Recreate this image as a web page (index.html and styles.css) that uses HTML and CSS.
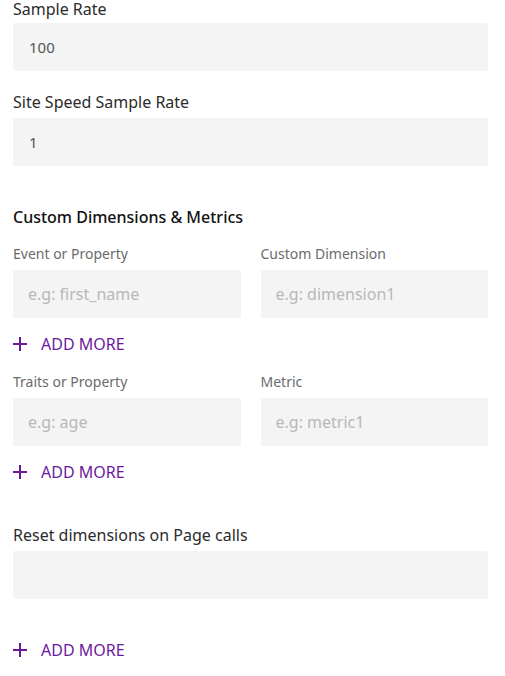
FILE: index.html
```html
<!DOCTYPE html>
<html>
<head>
<meta charset="utf-8">
<link rel="stylesheet" href="styles.css">
</head>
<body>
<div class="form">
  <div class="field first">
    <div class="label">Sample Rate</div>
    <div class="input"><span class="value">100</span></div>
  </div>
  <div class="field">
    <div class="label">Site Speed Sample Rate</div>
    <div class="input"><span class="value">1</span></div>
  </div>

  <div class="heading">Custom Dimensions &amp; Metrics</div>

  <div class="pair">
    <div class="col">
      <div class="sublabel">Event or Property</div>
      <div class="input"><span class="placeholder">e.g: first_name</span></div>
    </div>
    <div class="col">
      <div class="sublabel">Custom Dimension</div>
      <div class="input"><span class="placeholder">e.g: dimension1</span></div>
    </div>
  </div>
  <div class="add">
    <svg class="plus" width="14" height="14" viewBox="0 0 14 14"><path d="M7 0V14M0 7H14" stroke="#6b1a9e" stroke-width="2"/></svg>
    <span>ADD MORE</span>
  </div>

  <div class="pair">
    <div class="col">
      <div class="sublabel">Traits or Property</div>
      <div class="input"><span class="placeholder">e.g: age</span></div>
    </div>
    <div class="col">
      <div class="sublabel">Metric</div>
      <div class="input"><span class="placeholder">e.g: metric1</span></div>
    </div>
  </div>
  <div class="add">
    <svg class="plus" width="14" height="14" viewBox="0 0 14 14"><path d="M7 0V14M0 7H14" stroke="#6b1a9e" stroke-width="2"/></svg>
    <span>ADD MORE</span>
  </div>

  <div class="field reset">
    <div class="label">Reset dimensions on Page calls</div>
    <div class="input"></div>
  </div>
  <div class="add last">
    <svg class="plus" width="14" height="14" viewBox="0 0 14 14"><path d="M7 0V14M0 7H14" stroke="#6b1a9e" stroke-width="2"/></svg>
    <span>ADD MORE</span>
  </div>
</div>
</body>
</html>
```

FILE: styles.css
```css
* { box-sizing: border-box; }
html, body { margin: 0; padding: 0; background: #fff; }
body {
  font-family: "Noto Sans", "Open Sans", sans-serif;
  color: #2b2b2b;
}
.form {
  width: 475px;
  margin: 0 0 0 13px;
  display: flex;
  flex-direction: column;
}
.field { margin-bottom: 21px; }
.label {
  font-size: 16px;
  line-height: 20px;
  color: #2b2b2b;
  margin-bottom: 6px;
}
.first .label {
  line-height: 18px;
  margin-bottom: 5px;
}
.input {
  height: 48px;
  background: #f4f4f4;
  border-radius: 2px;
  display: flex;
  align-items: center;
  padding-left: 16px;
}
.value { color: #555; font-size: 15px; }
.placeholder { color: #b8b8b8; font-size: 16px; }
.heading {
  margin-top: 20px;
  font-size: 16px;
  line-height: 20px;
  font-weight: 500;
  color: #111;
  margin-bottom: 18px;
}
.pair {
  display: grid;
  grid-template-columns: 1fr 1fr;
  column-gap: 20px;
}
.sublabel {
  font-size: 14px;
  line-height: 18px;
  color: #6b6b6b;
  margin-bottom: 7px;
}
.col .input { padding-left: 15px; }
.add {
  display: flex;
  align-items: center;
  gap: 14px;
  height: 20px;
  margin: 16px 0 19px;
  color: #6b1a9e;
  font-size: 16px;
  line-height: 20px;
}
.plus { display: block; }
.reset { margin-top: 24px; margin-bottom: 0; }
.add.last { margin-top: 41px; }
```
